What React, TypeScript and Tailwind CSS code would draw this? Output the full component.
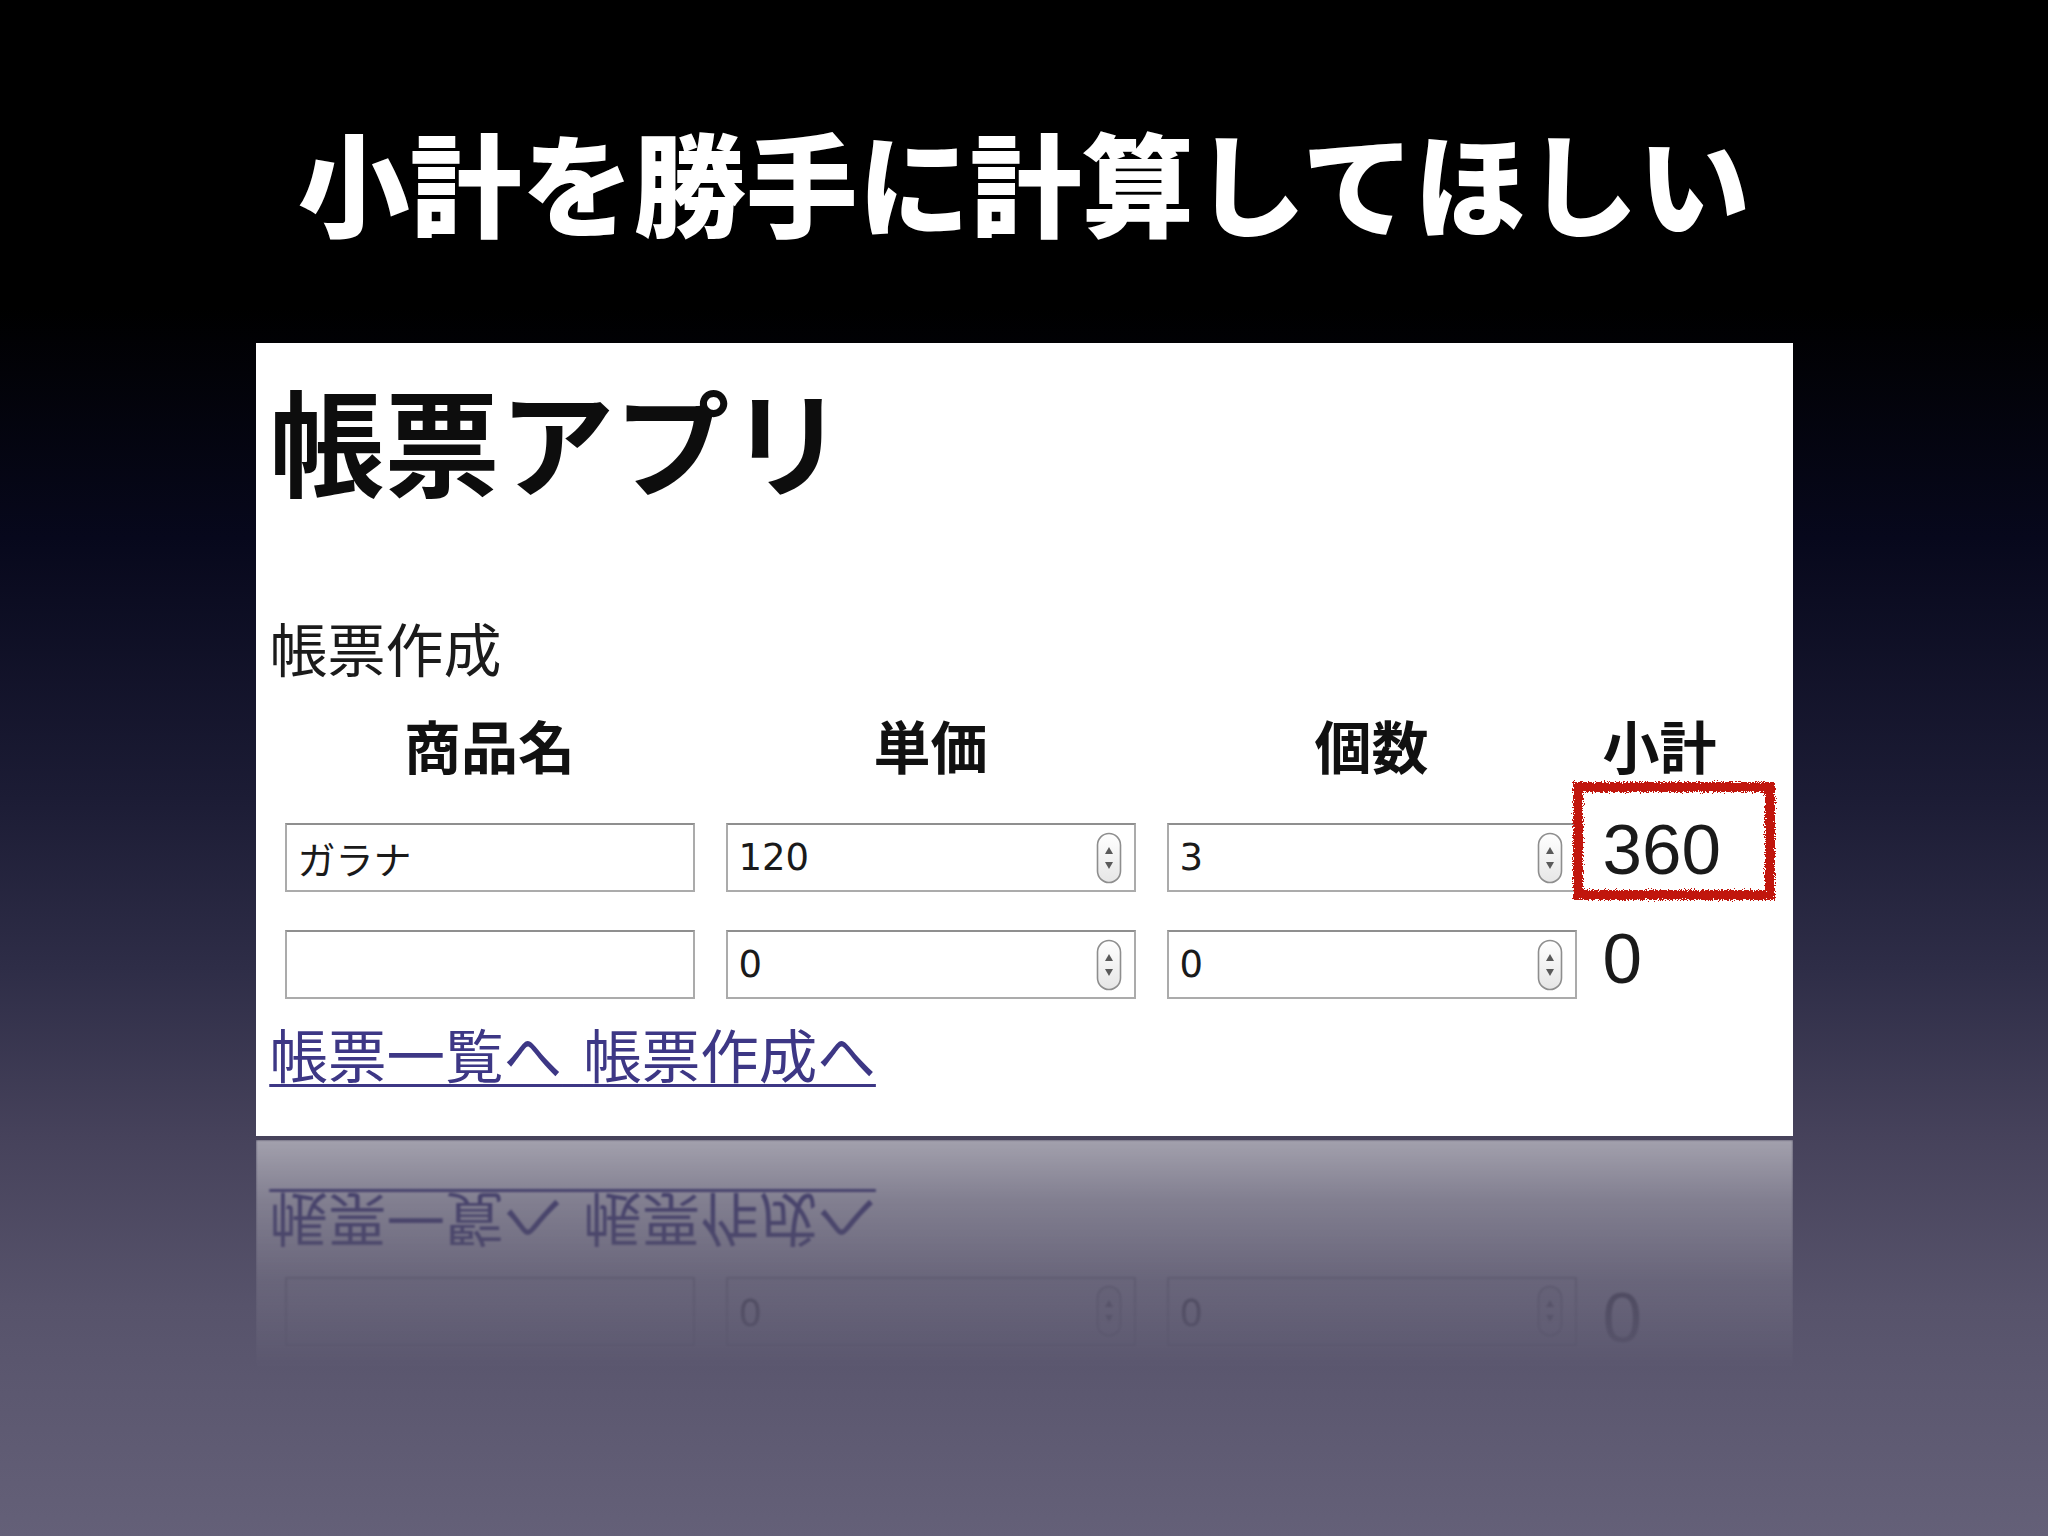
import React from "react";

const jp = "font-['Noto_Sans_CJK_JP','Noto_Sans',sans-serif]";
const mono = "font-['DejaVu_Sans','Noto_Sans_CJK_JP',sans-serif]";

function Spinner() {
  return (
    <svg width="26" height="52" viewBox="0 0 26 52" className="shrink-0">
      <defs>
        <linearGradient id="spin" x1="0" y1="0" x2="0" y2="1">
          <stop offset="0" stopColor="#ffffff" />
          <stop offset="1" stopColor="#e6e6e6" />
        </linearGradient>
      </defs>
      <rect x="1.5" y="1.5" width="23" height="49" rx="11.5" fill="url(#spin)" stroke="#8e8e8e" strokeWidth="1.6" />
      <path d="M9 22 L17 22 L13 15 Z" fill="#5a5a5a" />
      <path d="M9 30 L17 30 L13 37 Z" fill="#5a5a5a" />
    </svg>
  );
}

function TextBox({ value }: { value: string }) {
  return (
    <div className="w-[410px] h-[69px] bg-white border-2 border-[#ababab] border-t-[#8f8f8f] flex items-center pl-[11px]">
      <span className={`${jp} text-[38px] leading-none text-[#1a1a1a]`}>{value}</span>
    </div>
  );
}

function NumberBox({ value }: { value: string }) {
  return (
    <div className="w-[410px] h-[69px] bg-white border-2 border-[#ababab] border-t-[#8f8f8f] flex items-center justify-between pl-[11px] pr-[12px]">
      <span className={`${mono} text-[37px] leading-none text-[#1a1a1a]`}>{value}</span>
      <Spinner />
    </div>
  );
}

function RoughBox() {
  return (
    <svg className="absolute -left-[31px] -top-[42px] w-[204px] h-[120px] overflow-visible" viewBox="0 0 204 120">
      <defs>
        <filter id="rough" x="-10%" y="-10%" width="120%" height="120%">
          <feTurbulence type="fractalNoise" baseFrequency="0.8" numOctaves="2" seed="5" />
          <feDisplacementMap in="SourceGraphic" scale="7" />
        </filter>
      </defs>
      <rect x="6" y="6" width="192" height="108" fill="none" stroke="#c1190b" strokeWidth="10" filter="url(#rough)" />
    </svg>
  );
}

function Sheet() {
  return (
    <div className="w-[1537px] h-[793px] bg-white pt-[38px] pl-[14px] flex flex-col">
      <h1 className={`${jp} text-[115px] font-bold leading-none text-[#0d0d0d]`}>帳票アプリ</h1>
      <p className={`${jp} mt-[122px] text-[58px] leading-none text-[#1b1b1b]`}>帳票作成</p>

      <div className="mt-[40px] ml-[15px] grid grid-cols-[441px_441px_436px_1fr] gap-y-[50px] items-start">
        <div className={`${jp} w-[410px] text-center text-[57px] font-bold leading-none text-[#111]`}>商品名</div>
        <div className={`${jp} w-[410px] text-center text-[57px] font-bold leading-none text-[#111]`}>単価</div>
        <div className={`${jp} w-[410px] text-center text-[57px] font-bold leading-none text-[#111]`}>個数</div>
        <div className={`${jp} text-[57px] font-bold leading-none text-[#111]`}>小計</div>

        <TextBox value="ガラナ" />
        <NumberBox value="120" />
        <NumberBox value="3" />
        <div className="relative h-[69px]">
          <RoughBox />
          <span className="block -mt-[9px] font-['Liberation_Sans',Arial,sans-serif] text-[71px] leading-none text-[#1a1a1a]">360</span>
        </div>
      </div>

      <div className="mt-[38px] ml-[15px] grid grid-cols-[441px_441px_436px_1fr] items-start">
        <TextBox value="" />
        <NumberBox value="0" />
        <NumberBox value="0" />
        <div className="h-[67px]">
          <span className="block -mt-[7px] font-['Liberation_Sans',Arial,sans-serif] text-[71px] leading-none text-[#1a1a1a]">0</span>
        </div>
      </div>

      <p className={`${jp} mt-[25px] text-[58.5px] leading-none text-[#3d3785] underline decoration-[3px] underline-offset-[6px] [word-spacing:8px]`}>
        <a href="#list">帳票一覧へ</a> <a href="#new">帳票作成へ</a>
      </p>
    </div>
  );
}

export default function App() {
  return (
    <div className="w-full h-screen overflow-hidden flex flex-col items-center bg-[linear-gradient(to_bottom,#000_0%,#000_20%,#07081c_35%,#1c1c35_52%,#2e2d47_63%,#46425b_74%,#57536b_85%,#646078_100%)]">
      <h2 className={`${jp} mt-[124px] text-[112px] font-black leading-none text-white`}>小計を勝手に計算してほしい</h2>

      <div className="mt-[107px]">
        <Sheet />
      </div>

      {/* reflection */}
      <div
        aria-hidden
        className="mt-[4px] w-[1537px] h-[240px] overflow-hidden [mask-image:linear-gradient(to_bottom,rgba(0,0,0,0.5),rgba(0,0,0,0.3)_60px,rgba(0,0,0,0.12)_140px,transparent_230px)] [-webkit-mask-image:linear-gradient(to_bottom,rgba(0,0,0,0.5),rgba(0,0,0,0.3)_60px,rgba(0,0,0,0.12)_140px,transparent_230px)]"
      >
        <div className="-scale-y-100 blur-[1px]">
          <Sheet />
        </div>
      </div>
    </div>
  );
}
